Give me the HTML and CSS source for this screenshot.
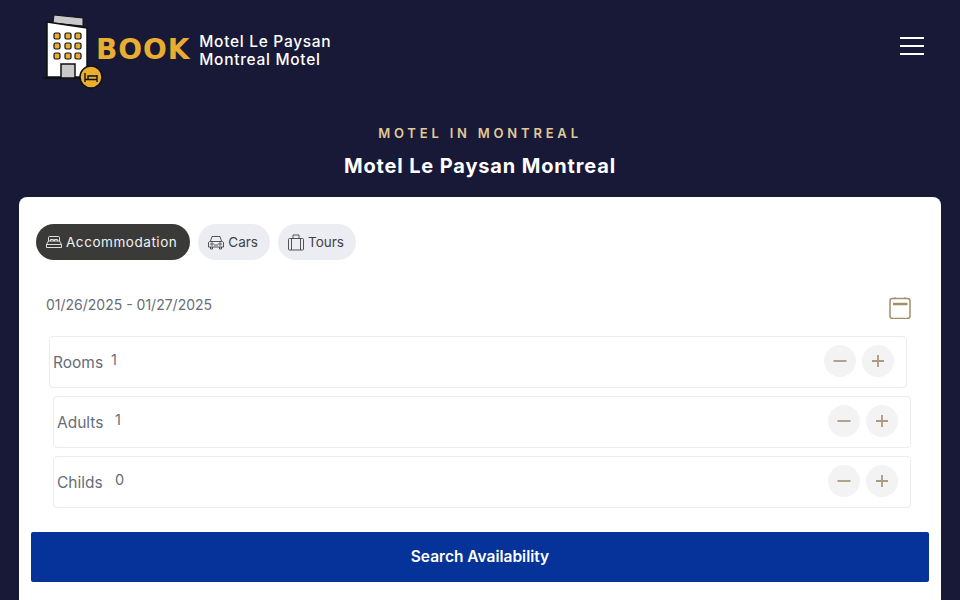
FILE: index.html
```html
<!DOCTYPE html>
<html>
<head>
    <title>Motel Le Paysan Montreal</title>
    <meta name="viewport" content="width=device-width,initial-scale=1.0">
    <link rel="stylesheet" href="styles.css">
</head>
<body>
    <header class="topbar">
        <a class="logo" href="#">
            <svg class="logo-mark" width="60" height="76" viewBox="0 0 60 76">
                <path d="M11 1 L40 4 L40 12 L10 9 Z" fill="#c9c9c9" stroke="#111" stroke-width="1"/>
                <path d="M4 8 L44 14 L44 63 L4 63 Z" fill="#fff" stroke="#111" stroke-width="1.5"/>
                <path d="M0 64 H48" stroke="#111" stroke-width="1.5"/>
                <g fill="#e9ae30" stroke="#111" stroke-width="1.2">
                    <rect x="11" y="19" width="6" height="6" rx="1.500"/><rect x="22" y="19" width="6" height="6" rx="1.500"/><rect x="32" y="19" width="6" height="6" rx="1.500"/>
                    <rect x="11" y="29" width="6" height="6" rx="1.500"/><rect x="22" y="29" width="6" height="6" rx="1.500"/><rect x="32" y="29" width="6" height="6" rx="1.500"/>
                    <rect x="11" y="39" width="6" height="6" rx="1.500"/><rect x="22" y="39" width="6" height="6" rx="1.500"/><rect x="32" y="39" width="6" height="6" rx="1.500"/>
                </g>
                <rect x="18" y="50" width="14" height="14" fill="#c9c9c9" stroke="#111" stroke-width="1.500"/>
                <circle cx="48" cy="63" r="11" fill="#e9ae30" stroke="#111" stroke-width="1.500"/>
                <path d="M42 59 V68 M54 61 V68 M42 65.500 H54 M45 62 H54 V65.500 H45 Z" fill="none" stroke="#111" stroke-width="1.400"/>
            </svg>
            <span class="logo-book">BOOK</span>
            <span class="logo-name">Motel Le Paysan<br>Montreal Motel</span>
        </a>
        <button class="menu-btn" aria-label="Menu"><span></span><span></span><span></span></button>
    </header>

    <div class="intro">
        <p class="eyebrow">MOTEL IN MONTREAL</p>
        <h1>Motel Le Paysan Montreal</h1>
    </div>

    <main class="card">
        <div class="tabs">
            <a class="tab active" href="#">
                <svg width="16" height="14" viewBox="0 0 16 14" fill="none" stroke="currentColor" stroke-width=".9"><path d="M2.500 6V2.500Q2.500 1.500 3.500 1.500H12.500Q13.500 1.500 13.500 2.500V6M.5 9.500L2.500 6H13.500L15.500 9.500V12.500H.5ZM.5 9.500H15.500M4.500 6V4.500H7.500V6M8.500 6V4.500H11.500V6"/></svg>
                <span>Accommodation</span>
            </a>
            <a class="tab" href="#">
                <svg width="16" height="15" viewBox="0 0 16 15" fill="none" stroke="currentColor" stroke-width=".9"><path d="M2.500 6L4 1.500H12L13.500 6M1.500 6.500H14.500Q15.500 7 15.500 8V12H.5V8Q.5 7 1.500 6.500ZM2.500 12V14H4.500V12M11.500 12V14H13.500V12M6 10H10"/><circle cx="4" cy="9" r="1.200"/><circle cx="12" cy="9" r="1.200"/></svg>
                <span>Cars</span>
            </a>
            <a class="tab" href="#">
                <svg width="16" height="17" viewBox="0 0 16 17" fill="none" stroke="currentColor" stroke-width=".9"><rect x=".5" y="4.500" width="15" height="11.500" rx="1"/><path d="M5 4.500V1H11V4.500M3.500 4.500V16M12.500 4.500V16"/></svg>
                <span>Tours</span>
            </a>
        </div>

        <div class="dates">
            <span>01/26/2025 - 01/27/2025</span>
            <svg width="22" height="24" viewBox="0 0 22 24" fill="none" stroke="#a38d6d"><rect x="1" y="3.500" width="20" height="20" rx="2.500" stroke-width="1.500"/><path d="M4 9H18.500" stroke-width="2.500"/><path d="M6 2V3.500M16 2V3.500"/></svg>
        </div>

        <div class="counter first">
            <span class="counter-label">Rooms</span><span class="counter-value">1</span>
            <div class="counter-btns">
                <button class="round"><svg width="14" height="14" viewBox="0 0 14 14"><path d="M.5 7H13.500"/></svg></button>
                <button class="round"><svg width="14" height="14" viewBox="0 0 14 14"><path d="M1 7H13M7 1V13"/></svg></button>
            </div>
        </div>
        <div class="counter">
            <span class="counter-label">Adults</span><span class="counter-value">1</span>
            <div class="counter-btns">
                <button class="round"><svg width="14" height="14" viewBox="0 0 14 14"><path d="M.5 7H13.500"/></svg></button>
                <button class="round"><svg width="14" height="14" viewBox="0 0 14 14"><path d="M1 7H13M7 1V13"/></svg></button>
            </div>
        </div>
        <div class="counter">
            <span class="counter-label">Childs</span><span class="counter-value">0</span>
            <div class="counter-btns">
                <button class="round"><svg width="14" height="14" viewBox="0 0 14 14"><path d="M.5 7H13.500"/></svg></button>
                <button class="round"><svg width="14" height="14" viewBox="0 0 14 14"><path d="M1 7H13M7 1V13"/></svg></button>
            </div>
        </div>

        <button class="search">Search Availability</button>
    </main>
</body>
</html>
```

FILE: styles.css
```css
* { box-sizing: border-box; }
html, body { margin: 0; padding: 0; height: 600px; overflow: hidden; }
body { background-color: #181937; color: #fff; font-family: Inter, "Liberation Sans", sans-serif; }
a { color: inherit; text-decoration: none; }
button { font-family: inherit; border: 0; cursor: pointer; }

.topbar { height: 97px; padding: 14px 36px 0 43px; display: flex; justify-content: space-between; align-items: flex-start; }
.logo { display: flex; align-items: center; height: 76px; }
.logo-mark { display: block; flex: none; }
.logo-book { margin: -6px 9px 0 -7px; font-family: "DejaVu Sans", sans-serif; font-size: 28px; font-weight: 700; color: #e9ae30; letter-spacing: .9px; }
.logo-name { margin-top: -3px; font-size: 15.500px; font-weight: 500; line-height: 18px; letter-spacing: .7px; }
.menu-btn { margin-top: 23px; width: 24px; height: 18px; padding: 0; background: none; display: flex; flex-direction: column; justify-content: space-between; }
.menu-btn span { display: block; height: 2px; background: #fff; }

.intro { text-align: center; }
.eyebrow { margin: 0; height: 55px; padding-top: 27px; font-size: 13px; line-height: 18px; font-weight: 600; letter-spacing: 3.800px; color: #e3c998; }
h1 { margin: 0; font-size: 20px; line-height: 28px; font-weight: 700; letter-spacing: .85px; }

.card { margin: 17px 19px 0; height: 500px; padding: 27px 12px 0; background: #fff; border-radius: 8px; color: #666d78; }

.tabs { display: flex; gap: 8px; margin-left: 5px; }
.tab { height: 36px; padding: 0 12px 0 10px; display: flex; align-items: center; gap: 4px; border-radius: 18px; background: #ecedf2; color: #3f4247; font-size: 13.500px; font-weight: 400; }
.tab.active { background: #3a3b39; color: #f2f2f2; padding-right: 13px; letter-spacing: .55px; }
.tab svg { flex: none; }

.dates { margin: 36px 18px 0 15px; height: 40px; display: flex; justify-content: space-between; align-items: flex-start; font-size: 14px; line-height: 18px; }
.dates svg { margin-top: -1px; }

.counter { margin: 0 18px 8px 22px; height: 52px; padding: 0 12px 0 3px; display: flex; align-items: center; border: 1px solid #ececec; border-radius: 4px; }
.counter.first { margin: 0 22px 8px 18px; }
.counter-label { width: 58px; font-size: 15.500px; }
.counter-value { margin-top: -6px; font-size: 14.500px; }
.counter-btns { margin-left: auto; margin-bottom: 2px; display: flex; gap: 6px; }
.round { width: 32px; height: 32px; padding: 0; border-radius: 50%; background: #f3f3f3; display: flex; align-items: center; justify-content: center; }
.round path { stroke: #ab9a80; stroke-width: 1.800; fill: none; }

.search { display: block; width: 100%; height: 50px; margin-top: 24px; padding-bottom: 2px; border-radius: 2px; background: #063399; color: #fff; font-size: 15.500px; font-weight: 600; }
```
